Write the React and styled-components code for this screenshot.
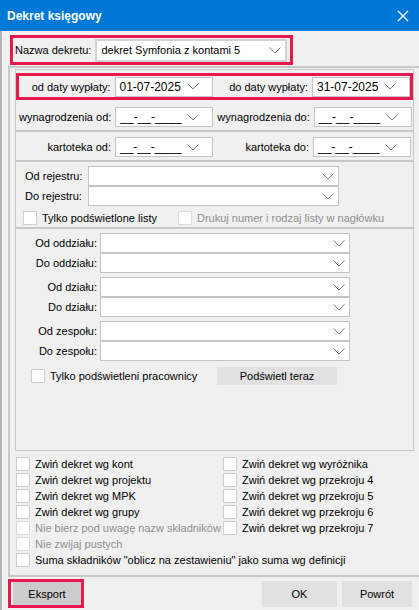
import React from 'react';
import styled, { createGlobalStyle } from 'styled-components';

const Global = createGlobalStyle`
  html, body { margin: 0; padding: 0; background: #f0f0f0; }
  body { font-family: "Liberation Sans", Arial, sans-serif; font-size: 11px; color: #000; }
  * { box-sizing: border-box; }
`;

const PINK = '#e8194f';
const LINE = '#c8c8c8';

const Window = styled.div`
  width: 419px;
  height: 610px;
  display: flex;
  flex-direction: column;
  background: #f0f0f0;
  overflow: hidden;
`;

const TitleBar = styled.div`
  height: 31px;
  flex: none;
  background: #0078d7;
  display: flex;
  align-items: center;
  justify-content: space-between;
  padding: 0 10px 0 7px;
`;

const Title = styled.div`
  color: #fff;
  font-weight: bold;
  font-size: 12px;
`;

const Body = styled.div`
  flex: 1;
  display: flex;
  flex-direction: column;
  border-left: 2px solid #b4b4b4;
  padding-top: 4px;
`;

const NameBox = styled.div`
  margin-left: 8px;
  width: 283px;
  height: 30px;
  flex: none;
  border: 3px solid ${PINK};
  display: flex;
  align-items: center;
  gap: 4px;
  padding: 0 3px 0 2px;
  margin-bottom: 1px;
`;

const Panel = styled.div`
  margin-left: 6px;
  width: 420px;
  height: 511px;
  flex: none;
  border: 2px solid ${LINE};
  display: flex;
  flex-direction: column;
  padding: 1px 0 0 5px;
`;

const Group = styled.div`
  width: 399px;
  height: 382px;
  flex: none;
  border: 1px solid ${LINE};
  display: flex;
  flex-direction: column;
`;

const DateBand = styled.div`
  height: ${p => p.$h || 30}px;
  flex: none;
  display: grid;
  grid-template-columns: 1fr 98px 1fr 98px;
  column-gap: 4px;
  align-items: ${p => (p.$pink ? 'center' : 'start')};
  padding: ${p => (p.$pink ? '0' : `${p.$pt || 5}px 2px 0 3px`)};
  border: ${p => (p.$pink ? `3px solid ${PINK}` : 'none')};
  border-bottom: ${p => (p.$pink ? `3px solid ${PINK}` : `2px solid ${LINE}`)};
  margin-top: ${p => p.$mt || 0}px;
`;

const Label = styled.div`
  text-align: right;
  white-space: nowrap;
  line-height: 20px;
  color: ${p => (p.$disabled ? '#8f8f8f' : '#000')};
`;

const SelectBox = styled.div`
  height: ${p => p.$h || 20}px;
  background: #fff;
  border: ${p => p.$bw || 1}px solid ${p => (p.$bw === 2 ? '#d2d2d2' : '#c4c4c4')};
  display: flex;
  align-items: center;
  padding-left: 4px;
  padding-right: ${p => p.$cr || 4}px;
  font-size: ${p => p.$fs || 11}px;
  white-space: nowrap;
  flex: ${p => (p.$grow ? 1 : 'none')};
`;

const Chev = styled.svg`
  margin-left: auto;
  flex: none;
`;

const Chevron = () => (
  <Chev width="12" height="7" viewBox="0 0 12 7">
    <path d="M0.5 0.5 L6 6 L11.5 0.5" fill="none" stroke="#7d7d7d" strokeWidth="1" />
  </Chev>
);

const Select = ({ value, cr, h, fs, bw, grow }) => (
  <SelectBox $cr={cr} $h={h} $fs={fs} $bw={bw} $grow={grow}>
    <span>{value}</span>
    <Chevron />
  </SelectBox>
);

const RegBand = styled.div`
  height: 67px;
  flex: none;
  border-bottom: 2px solid ${LINE};
  padding: 4px 0 0 9px;
  display: flex;
  flex-direction: column;
`;

const RegGrid = styled.div`
  display: grid;
  grid-template-columns: 63px 251px;
  grid-auto-rows: 20px;
`;

const RegLabel = styled.div`
  display: flex;
  align-items: center;
`;

const CheckRow = styled.div`
  display: flex;
  align-items: center;
  gap: 5px;
  height: ${p => p.$h || 16}px;
  margin-left: ${p => p.$ml || 0}px;
  white-space: nowrap;
  color: ${p => (p.$disabled ? '#8f8f8f' : '#000')};
`;

const Box = styled.span`
  width: 14px;
  height: 14px;
  flex: none;
  background: #fff;
  border: 1px solid ${p => (p.$disabled ? '#dcdcdc' : '#cfcfcf')};
`;

const RegChecks = styled.div`
  display: flex;
  align-items: center;
  margin-top: 4px;
`;

const DeptBand = styled.div`
  flex: 1;
  padding: 4px 0 0 0;
  display: flex;
  flex-direction: column;
  gap: 4px;
`;

const Pair = styled.div`
  display: grid;
  grid-template-columns: 81px 250px;
  grid-auto-rows: 20px;
  column-gap: 3px;
`;

const DeptLabel = styled.div`
  display: flex;
  align-items: center;
  justify-content: flex-end;
`;

const DeptFoot = styled.div`
  display: flex;
  align-items: center;
  margin-top: 2px;
  padding-left: 15px;
`;

const Button = styled.div`
  width: ${p => p.$w || 75}px;
  height: ${p => p.$h || 26}px;
  flex: none;
  background: ${p => p.$bg || '#e1e1e1'};
  display: flex;
  align-items: center;
  justify-content: center;
  white-space: nowrap;
  color: #000;
  margin-right: ${p => p.$mr || 0}px;
`;

const Options = styled.div`
  display: grid;
  grid-template-columns: 207px 1fr;
  align-content: start;
  padding: 5px 0 0 1px;
`;

const OptCol = styled.div`
  display: flex;
  flex-direction: column;
`;

const OptWide = styled.div`
  grid-column: 1 / span 2;
`;

const Footer = styled.div`
  flex: 1;
  display: flex;
  align-items: center;
  padding: 0 7px 0 6px;
`;

const PinkWrap = styled.div`
  border: 3px solid ${PINK};
  padding: 0 0 0 2px;
  display: flex;
  align-items: center;
  height: 29px;
`;

const Spacer = styled.div`
  flex: 1;
`;

const BtnGap = styled.div`
  width: 5px;
`;

const Check = ({ children, disabled, ml, h }) => (
  <CheckRow $disabled={disabled} $ml={ml} $h={h}>
    <Box $disabled={disabled} />
    <span>{children}</span>
  </CheckRow>
);

const EMPTY = '__-__-____';

export default function App() {
  return (
    <>
      <Global />
      <Window>
        <TitleBar>
          <Title>Dekret księgowy</Title>
          <svg width="12" height="12" viewBox="0 0 12 12">
            <path d="M1 1 L11 11 M11 1 L1 11" stroke="#fff" strokeWidth="1.3" />
          </svg>
        </TitleBar>
        <Body>
          <NameBox>
            <Label>Nazwa dekretu:</Label>
            <Select value="dekret Symfonia z kontami 5" h={23} bw={2} grow />
          </NameBox>
          <Panel>
            <Group>
              <DateBand $pink $h={27} $mt={3}>
                <Label>od daty wypłaty:</Label>
                <Select value="01-07-2025" cr={13} fs={12} />
                <Label>do daty wypłaty:</Label>
                <Select value="31-07-2025" cr={13} fs={12} />
              </DateBand>
              <DateBand $h={32} $pt={7}>
                <Label>wynagrodzenia od:</Label>
                <Select value={EMPTY} cr={13} fs={12} />
                <Label>wynagrodzenia do:</Label>
                <Select value={EMPTY} cr={13} fs={12} />
              </DateBand>
              <DateBand $h={30} $pt={5}>
                <Label>kartoteka od:</Label>
                <Select value={EMPTY} cr={13} fs={12} />
                <Label>kartoteka do:</Label>
                <Select value={EMPTY} cr={13} fs={12} />
              </DateBand>
              <RegBand>
                <RegGrid>
                  <RegLabel>Od rejestru:</RegLabel>
                  <Select value="" />
                  <RegLabel>Do rejestru:</RegLabel>
                  <Select value="" />
                </RegGrid>
                <RegChecks>
                  <Check ml={-2}>Tylko podświetlone listy</Check>
                  <Check ml={21} disabled>Drukuj numer i rodzaj listy w nagłówku</Check>
                </RegChecks>
              </RegBand>
              <DeptBand>
                <Pair>
                  <DeptLabel>Od oddziału:</DeptLabel>
                  <Select value="" />
                  <DeptLabel>Do oddziału:</DeptLabel>
                  <Select value="" />
                </Pair>
                <Pair>
                  <DeptLabel>Od działu:</DeptLabel>
                  <Select value="" />
                  <DeptLabel>Do działu:</DeptLabel>
                  <Select value="" />
                </Pair>
                <Pair>
                  <DeptLabel>Od zespołu:</DeptLabel>
                  <Select value="" />
                  <DeptLabel>Do zespołu:</DeptLabel>
                  <Select value="" />
                </Pair>
                <DeptFoot>
                  <Check h={18}>Tylko podświetleni pracownicy</Check>
                  <Spacer />
                  <Button $w={120} $h={18} $mr={76}>Podświetl teraz</Button>
                </DeptFoot>
              </DeptBand>
            </Group>
            <Options>
              <OptCol>
                <Check>Zwiń dekret wg kont</Check>
                <Check>Zwiń dekret wg projektu</Check>
                <Check>Zwiń dekret wg MPK</Check>
                <Check>Zwiń dekret wg grupy</Check>
                <Check disabled>Nie bierz pod uwagę nazw składników</Check>
                <Check disabled>Nie zwijaj pustych</Check>
              </OptCol>
              <OptCol>
                <Check>Zwiń dekret wg wyróżnika</Check>
                <Check>Zwiń dekret wg przekroju 4</Check>
                <Check>Zwiń dekret wg przekroju 5</Check>
                <Check>Zwiń dekret wg przekroju 6</Check>
                <Check>Zwiń dekret wg przekroju 7</Check>
              </OptCol>
              <OptWide>
                <Check>Suma składników "oblicz na zestawieniu" jako suma wg definicji</Check>
              </OptWide>
            </Options>
          </Panel>
          <Footer>
            <PinkWrap>
              <Button $w={68} $h={23} $bg="#cccccc">Eksport</Button>
            </PinkWrap>
            <Spacer />
            <Button>OK</Button>
            <BtnGap />
            <Button $w={70}>Powrót</Button>
          </Footer>
        </Body>
      </Window>
    </>
  );
}
